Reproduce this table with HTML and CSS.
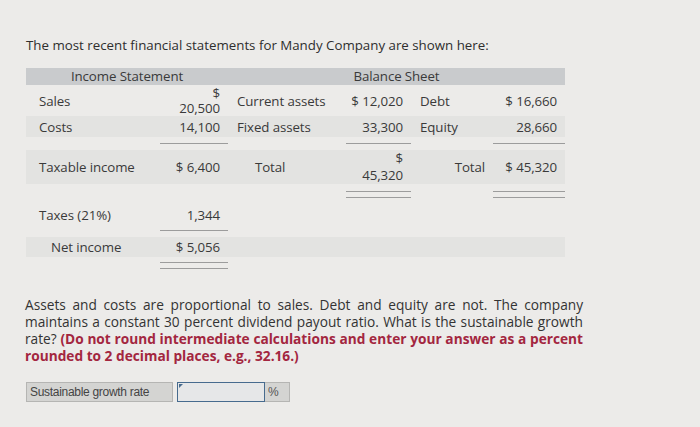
FILE: index.html
```html
<!DOCTYPE html>
<html>
<head>
<meta charset="utf-8">
<link rel="stylesheet" href="styles.css">
</head>
<body>
<div class="page">
  <p class="intro">The most recent financial statements for Mandy Company are shown here:</p>
  <div class="fs">
    <div class="row head">
      <div class="span-is">Income Statement</div>
      <div class="span-bs">Balance Sheet</div>
    </div>
    <div class="row r-sales">
      <div class="lbl">Sales</div>
      <div class="num stack tight"><span>$</span><span>20,500</span></div>
      <div class="lbl2">Current assets</div>
      <div class="num">$ 12,020</div>
      <div class="lbl2">Debt</div>
      <div class="num">$ 16,660</div>
    </div>
    <div class="row r-costs band">
      <div class="lbl">Costs</div>
      <div class="num">14,100</div>
      <div class="lbl2">Fixed assets</div>
      <div class="num">33,300</div>
      <div class="lbl2">Equity</div>
      <div class="num">28,660</div>
    </div>
    <div class="row lines l1">
      <div></div><div class="ln"></div><div></div><div class="ln"></div><div></div><div class="ln"></div>
    </div>
    <div class="row r-tax band">
      <div class="lbl">Taxable income</div>
      <div class="num">$ 6,400</div>
      <div class="lbl2 total">Total</div>
      <div class="num stack"><span>$</span><span>45,320</span></div>
      <div class="lbl2 right">Total</div>
      <div class="num">$ 45,320</div>
    </div>
    <div class="row lines l2">
      <div></div><div></div><div></div><div class="dl"></div><div></div><div class="dl"></div>
    </div>
    <div class="row r-taxes">
      <div class="lbl">Taxes (21%)</div>
      <div class="num">1,344</div>
    </div>
    <div class="row lines l3">
      <div></div><div class="ln"></div>
    </div>
    <div class="row r-net band">
      <div class="lbl indent">Net income</div>
      <div class="num">$ 5,056</div>
    </div>
    <div class="row lines l4">
      <div></div><div class="dl"></div>
    </div>
  </div>
  <p class="question">Assets and costs are proportional to sales. Debt and equity are not. The company maintains a constant 30 percent dividend payout ratio. What is the sustainable growth rate? <strong class="hint">(Do not round intermediate calculations and enter your answer as a percent rounded to 2 decimal places, e.g., 32.16.)</strong></p>
  <div class="answer">
    <div class="ans-label">Sustainable growth rate</div>
    <div class="ans-input"><span class="caret"></span></div>
    <div class="ans-unit">%</div>
  </div>
</div>
</body>
</html>
```
FILE: styles.css
```css
html, body {
  margin: 0;
  padding: 0;
}
body {
  background: #ecebe9;
  font-family: "Open Sans", "Lato", sans-serif;
  color: #3a3a3a;
  width: 700px;
  height: 427px;
  overflow: hidden;
}
.page {
  padding: 37px 0 0 26px;
}
.intro {
  margin: 0;
  font-size: 13.3px;
  line-height: 17px;
  color: #2e2e2e;
}
.fs {
  margin-top: 14px;
  width: 539px;
  font-size: 13.3px;
  letter-spacing: -0.1px;
}
.row {
  display: grid;
  grid-template-columns: 134px 68px 118px 65px 82px 72px;
  align-items: center;
}
.head {
  height: 17px;
  background: #c9cbcd;
  grid-template-columns: 202px 337px;
  line-height: 17px;
}
.span-is, .span-bs {
  text-align: center;
}
.band {
  background: #e3e3e1;
}
.r-sales { height: 30px; margin-top: 1px; }
.r-costs { height: 21px; }
.l1 { height: 12px; }
.r-tax { height: 34px; margin-top: 1px; }
.l2 { height: 20px; }
.r-taxes { height: 21px; }
.l3 { height: 12px; }
.r-net { height: 20px; }
.l4 { height: 14px; }
.lbl { padding-left: 13px; }
.lbl.indent { padding-left: 25px; }
.lbl2 { padding-left: 9px; }
.lbl2.total { padding-left: 27px; }
.lbl2.right { text-align: right; padding-right: 8px; padding-left: 0; }
.num {
  text-align: right;
  padding-right: 8px;
}
.stack {
  display: flex;
  flex-direction: column;
  line-height: 17px;
}
.stack.tight {
  line-height: 15px;
}
.lines .ln {
  border-top: 1px solid #9c9c9c;
  align-self: end;
  margin-bottom: 5px;
}
.l3 .ln { align-self: start; margin: 5px 0 0; }
.l4 .dl { align-self: start; margin-top: 5px; }
.lines .dl {
  height: 5px;
  border-top: 1px solid #9c9c9c;
  border-bottom: 1px solid #9c9c9c;
}
.question {
  margin: 25px 0 0 -1px;
  width: 558px;
  font-size: 13.7px;
  line-height: 17px;
  text-align: justify;
  color: #333;
}
.hint {
  color: #a3263f;
  font-weight: 700;
}
.answer {
  margin-top: 18px;
  display: flex;
  height: 20px;
  font-family: "Liberation Sans", Arial, sans-serif;
  font-size: 12px;
}
.ans-label {
  width: 142px;
  background: #d4d4d2;
  border: 1px solid #b5b5b3;
  padding-left: 3px;
  line-height: 18px;
  color: #444;
  letter-spacing: -0.3px;
}
.ans-input {
  margin-left: 4px;
  width: 86px;
  background: #e6e7e8;
  border: 1px solid #476b8e;
  position: relative;
}
.caret {
  position: absolute;
  left: 1px;
  top: 1px;
  width: 0;
  height: 0;
  border-top: 4px solid #476b8e;
  border-right: 4px solid transparent;
}
.ans-unit {
  width: 21px;
  background: #d4d4d2;
  border: 1px solid #b5b5b3;
  border-left: none;
  padding-left: 3px;
  line-height: 18px;
  color: #555;
}
```
